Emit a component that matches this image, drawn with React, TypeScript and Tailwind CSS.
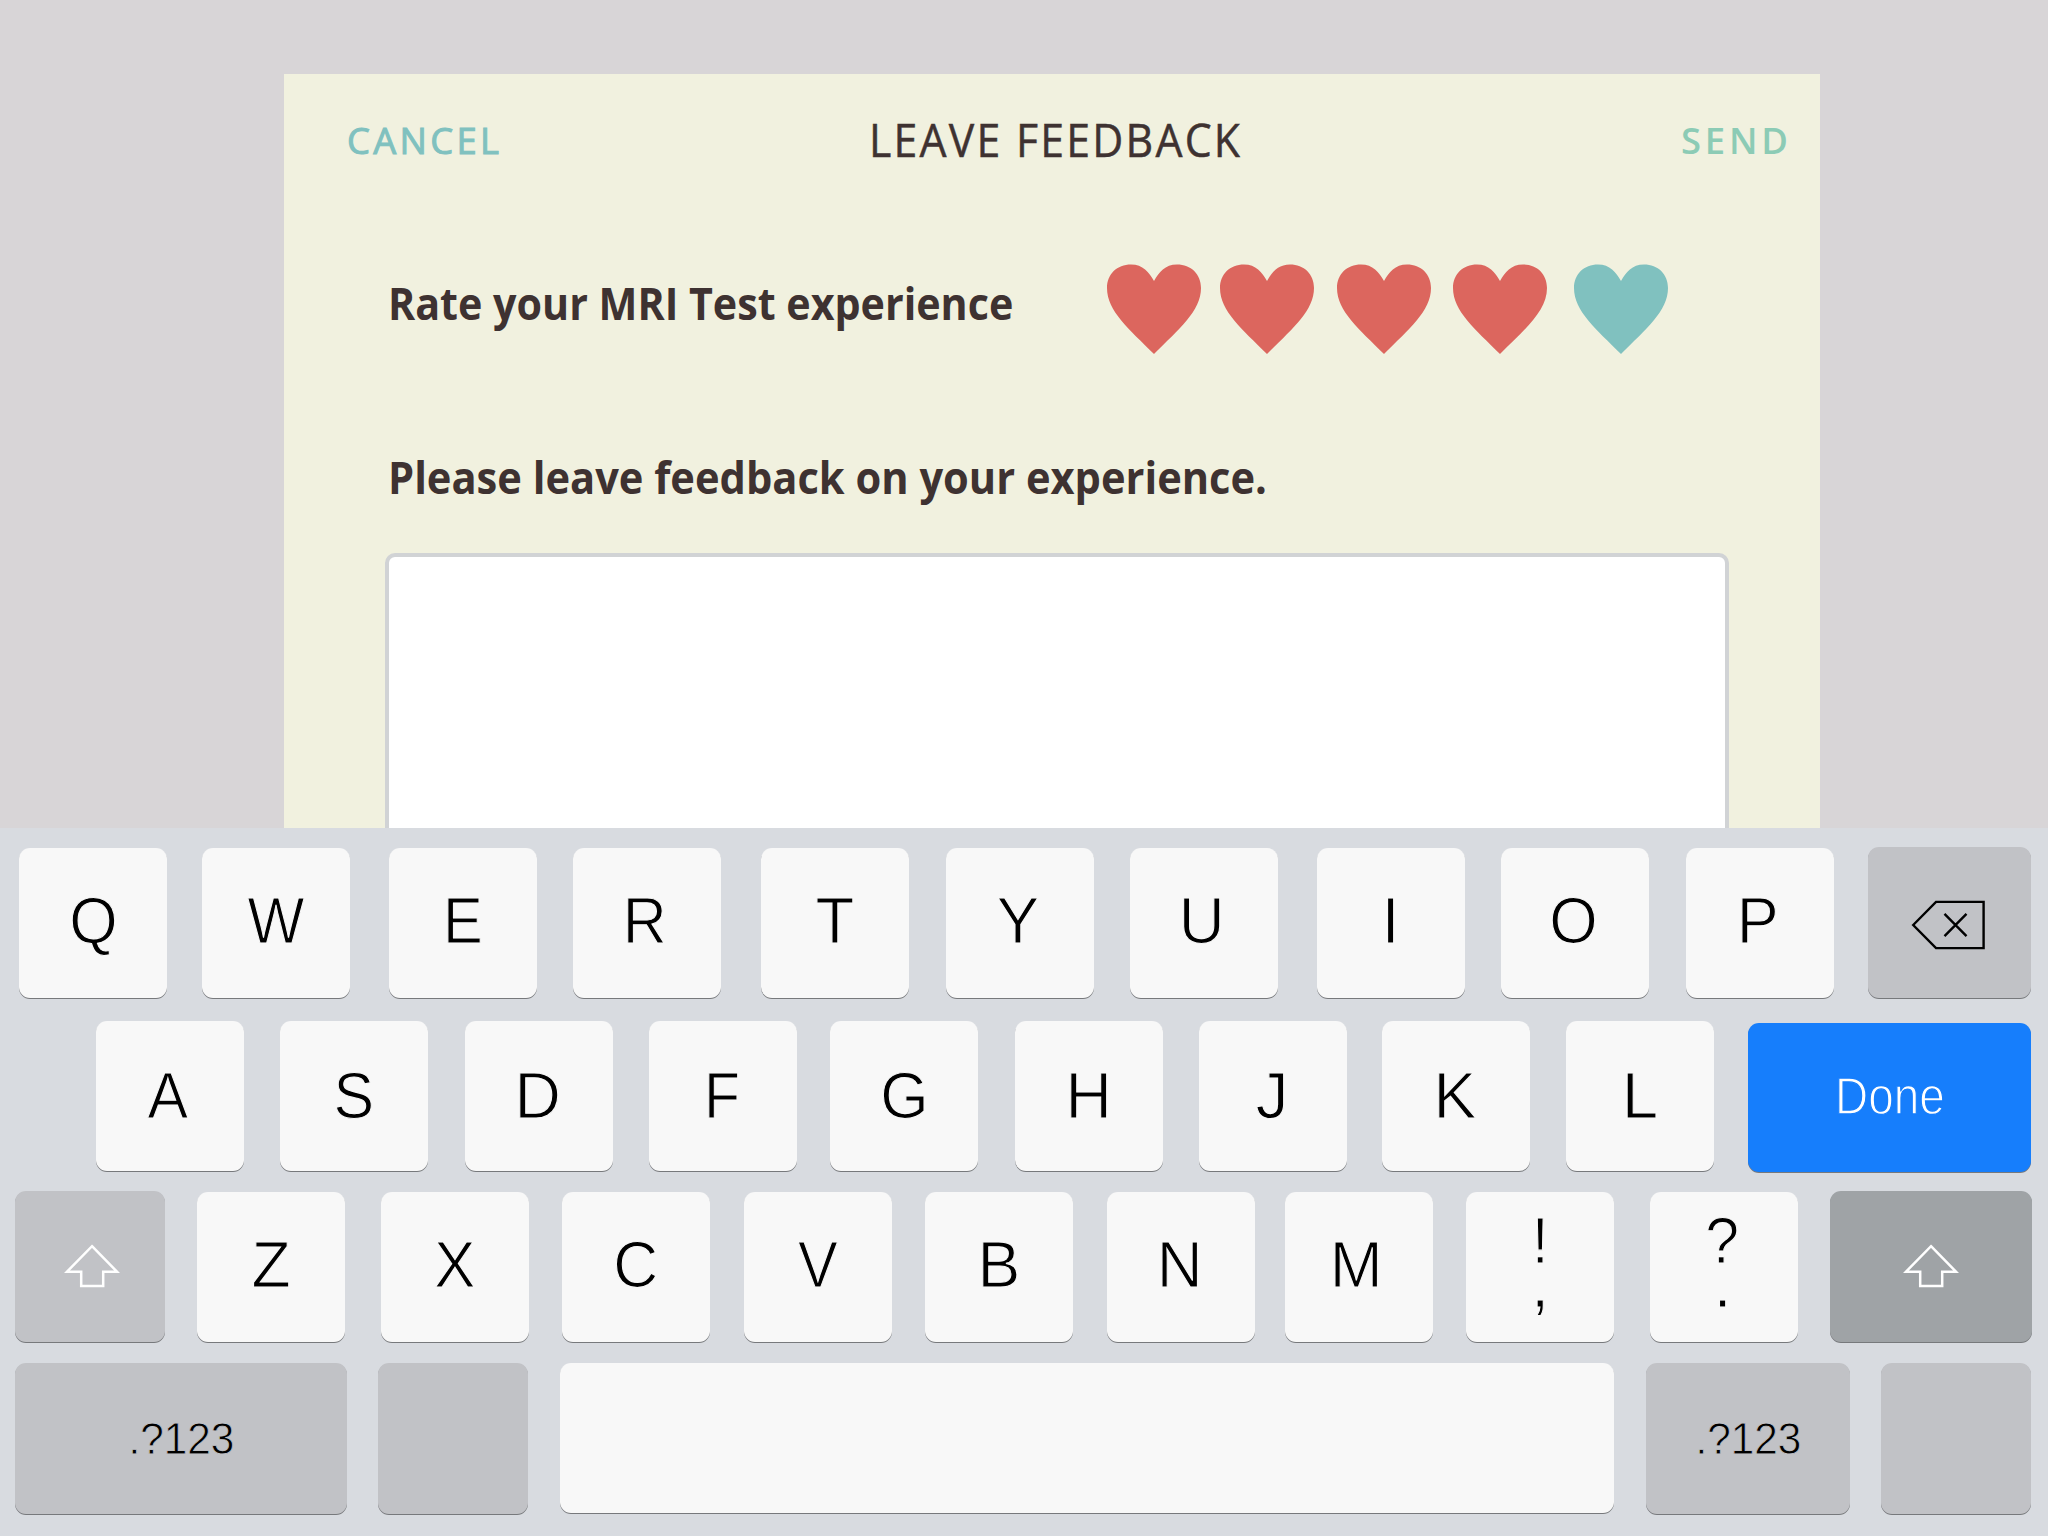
import type { ReactNode } from 'react';

const HEARTS = [
  { spacing: '', color: 'text-[#dc665e]' },
  { spacing: 'ml-[18.5px]', color: 'text-[#dc665e]' },
  { spacing: 'ml-[23.5px]', color: 'text-[#dc665e]' },
  { spacing: 'ml-[22px]', color: 'text-[#dc665e]' },
  { spacing: 'ml-[26.5px]', color: 'text-[#80c1bf]' },
];

function Heart({ className }: { className: string }) {
  return (
    <svg viewBox="0 0 94 90" className={`h-[90px] w-[94px] shrink-0 ${className}`} fill="currentColor">
      <path d="M47 90C22 65 0 47 0 24C0 10 10 0.4 24 0.4C36 0.4 42 8 47 17C52 8 58 0.4 70 0.4C84 0.4 94 10 94 24C94 47 72 65 47 90Z" />
    </svg>
  );
}

function ShiftIcon({ className = '' }: { className?: string }) {
  return (
    <svg viewBox="0 0 56 44" className={`h-[44px] w-[56px] ${className}`} fill="none" stroke="#fff" strokeWidth="2.5">
      <path d="M28 2.2L53 27.7H39.2V42H17.2V27.7H3Z" />
    </svg>
  );
}

function BackspaceIcon() {
  return (
    <svg viewBox="0 0 76 50" className="mt-[4px] mr-[3px] h-[50px] w-[76px]" fill="none" stroke="#000" strokeWidth="2.4">
      <path d="M3.2 25L26 1.9H73.6V48.1H26Z" />
      <path d="M34.5 13.8L56.5 36.2M56.5 13.8L34.5 36.2" />
    </svg>
  );
}

type KeyProps = {
  className?: string;
  tone?: string;
  children?: ReactNode;
};

function Key({ className = '', tone = 'bg-[#f8f8f8]', children }: KeyProps) {
  return (
    <button
      type="button"
      className={`flex shrink-0 items-center justify-center rounded-[11px] text-black shadow-[0_1px_0.5px_#77797c] ${tone} ${className}`}
    >
      {children}
    </button>
  );
}

type LetterKey = { label: string; spacing: string; width: string; nudge?: string };

const TOP_ROW: LetterKey[] = [
  { label: 'Q', spacing: 'ml-[18.5px]', width: 'scale-x-[0.95]', nudge: 'pl-[1px]' },
  { label: 'W', spacing: 'ml-[35.5px]', width: 'scale-x-[0.92]' },
  { label: 'E', spacing: 'ml-[39px]', width: 'scale-x-[0.91]', nudge: 'pr-[1px]' },
  { label: 'R', spacing: 'ml-[36px]', width: 'scale-x-[0.93]', nudge: 'pr-[4px]' },
  { label: 'T', spacing: 'ml-[40px]', width: 'scale-x-[0.97]' },
  { label: 'Y', spacing: 'ml-[37px]', width: 'scale-x-[0.97]', nudge: 'pr-[4px]' },
  { label: 'U', spacing: 'ml-[36px]', width: 'scale-x-[0.97]', nudge: 'pr-[4px]' },
  { label: 'I', spacing: 'ml-[38.5px]', width: 'scale-x-[1]' },
  { label: 'O', spacing: 'ml-[36px]', width: 'scale-x-[0.95]', nudge: 'pr-[2px]' },
  { label: 'P', spacing: 'ml-[37px]', width: 'scale-x-[0.96]', nudge: 'pr-[4px]' },
];

const HOME_ROW: LetterKey[] = [
  { label: 'A', spacing: 'ml-[95.5px]', width: 'scale-x-[0.93]', nudge: 'pr-[4px]' },
  { label: 'S', spacing: 'ml-[36.5px]', width: 'scale-x-[0.93]', nudge: 'pr-[1px]' },
  { label: 'D', spacing: 'ml-[37px]', width: 'scale-x-[0.98]', nudge: 'pr-[2px]' },
  { label: 'F', spacing: 'ml-[36px]', width: 'scale-x-[0.9]', nudge: 'pr-[1px]' },
  { label: 'G', spacing: 'ml-[33px]', width: 'scale-x-[0.95]', nudge: 'pl-[1px]' },
  { label: 'H', spacing: 'ml-[37px]', width: 'scale-x-[0.98]', nudge: 'pr-[1px]' },
  { label: 'J', spacing: 'ml-[36px]', width: 'scale-x-[1]', nudge: 'pr-[2px]' },
  { label: 'K', spacing: 'ml-[35px]', width: 'scale-x-[0.98]', nudge: 'pr-[2px]' },
  { label: 'L', spacing: 'ml-[36px]', width: 'scale-x-[1]' },
];

const BOTTOM_ROW: LetterKey[] = [
  { label: 'Z', spacing: 'ml-[32px]', width: 'scale-x-[0.98]' },
  { label: 'X', spacing: 'ml-[35.5px]', width: 'scale-x-[0.94]' },
  { label: 'C', spacing: 'ml-[33.5px]', width: 'scale-x-[0.95]' },
  { label: 'V', spacing: 'ml-[33.5px]', width: 'scale-x-[0.91]' },
  { label: 'B', spacing: 'ml-[33.5px]', width: 'scale-x-[0.98]' },
  { label: 'N', spacing: 'ml-[34px]', width: 'scale-x-[0.97]', nudge: 'pr-[3px]' },
  { label: 'M', spacing: 'ml-[29.5px]', width: 'scale-x-[0.97]', nudge: 'pr-[4px]' },
];

// A stroke in the key's own colour trims the regular weight down to a light one.
const LIGHT_LETTER = 'text-[65.5px] [-webkit-text-stroke:1.1px_#f8f8f8]';

function Letters({ keys, lift }: { keys: LetterKey[]; lift: string }) {
  return (
    <>
      {keys.map(({ label, spacing, width, nudge = '' }) => (
        <Key key={label} className={`h-[150px] w-[148px] ${spacing} ${nudge}`}>
          <span className={`inline-block leading-[60px] ${LIGHT_LETTER} ${lift} ${width}`}>{label}</span>
        </Key>
      ))}
    </>
  );
}

function PunctuationKey({ upper, lower, spacing }: { upper: string; lower: string; spacing: string }) {
  return (
    <Key className={`h-[150px] w-[148px] flex-col pb-[9px] leading-[44px] ${LIGHT_LETTER} ${spacing}`}>
      <span className="inline-block scale-x-[0.93]">{upper}</span>
      <span>{lower}</span>
    </Key>
  );
}

function NumberLabel() {
  return (
    <span className="inline-block scale-x-[0.94] text-[45px] leading-none [-webkit-text-stroke:0.8px_#c1c2c6]">.?123</span>
  );
}

const GRAY = 'bg-[#c1c2c6]';

export default function App() {
  return (
    <div className="flex h-[1536px] w-[2048px] flex-col overflow-hidden bg-[#d8d5d7]">
      <main className="ml-[284px] h-[828px] w-[1536px] overflow-hidden pt-[74px]">
        <div className="h-[900px] bg-[#f1f1df] font-['Open_Sans',sans-serif] text-[#3e3231]">
          <header className="flex h-[132px] items-center">
            <div className="w-[524px] pl-[63px]">
              <button type="button" className="text-[36.4px] leading-[50px] tracking-[3.3px] text-[#80c1bf] [-webkit-text-stroke:1px_#80c1bf]">
                CANCEL
              </button>
            </div>
            <div className="-mt-[3px] w-[488px] pl-[61px]">
              <h1 className="origin-left scale-x-[0.93] text-[46px] leading-[60px] font-normal whitespace-nowrap tracking-[2.4px] [-webkit-text-stroke:0.5px_#3e3231]">
                LEAVE FEEDBACK
              </h1>
            </div>
            <div className="flex-1 pl-[385px]">
              <button type="button" className="text-[36.4px] leading-[50px] font-semibold tracking-[3.8px] text-[#8ccbb5]">
                SEND
              </button>
            </div>
          </header>

          <section className="mt-[58px] flex h-[90px] items-center">
            <h2 className="-mt-[14px] ml-[104px] w-[719px] origin-left scale-x-[0.906] text-[45.5px] leading-[60px] font-bold whitespace-nowrap">
              Rate your MRI Test experience
            </h2>
            <div className="flex">
              {HEARTS.map(({ spacing, color }, i) => (
                <Heart key={i} className={`${spacing} ${color}`} />
              ))}
            </div>
          </section>

          <h2 className="mt-[92px] ml-[104px] w-[1200px] origin-left scale-x-[0.915] text-[45.5px] leading-[60px] font-bold whitespace-nowrap">
            Please leave feedback on your experience.
          </h2>
          <div className="mt-[47px] ml-[101px] h-[420px] w-[1344px] rounded-[10px] border-4 border-[#d1d3d5] bg-white" />
        </div>
      </main>

      <section className="h-[708px] bg-[#d8dbe0] pt-[20px] font-['Liberation_Sans',sans-serif]">
        <div className="flex items-start">
          <Letters keys={TOP_ROW} lift="-mt-[4px]" />
          <Key tone={GRAY} className="-mt-px ml-[34.5px] h-[151px] w-[163px]">
            <BackspaceIcon />
          </Key>
        </div>

        <div className="mt-[23px] flex h-[150px] items-start">
          <Letters keys={HOME_ROW} lift="" />
          <Key tone="bg-[#167efc]" className="mt-[2px] ml-[34px] h-[149px] w-[283px]">
            <span className="-mt-[2px] inline-block scale-x-[0.9] text-[51px] leading-none text-white [-webkit-text-stroke:1.3px_#167efc]">
              Done
            </span>
          </Key>
        </div>

        <div className="mt-[21px] flex h-[150px] items-start">
          <Key tone={GRAY} className="-mt-px ml-[15px] h-[151px] w-[150px]">
            <ShiftIcon className="-mt-[2px] ml-[4px]" />
          </Key>
          <Letters keys={BOTTOM_ROW} lift="-mt-[4px]" />
          <PunctuationKey upper="!" lower="," spacing="ml-[33.5px]" />
          <PunctuationKey upper="?" lower="." spacing="ml-[35.5px] pr-[2px]" />
          <Key tone="bg-[#9fa3a6]" className="-mt-px ml-[32px] h-[151px] w-[202px]">
            <ShiftIcon className="-mt-[2px]" />
          </Key>
        </div>

        <div className="mt-[21px] flex items-start">
          <Key tone={GRAY} className="ml-[15px] h-[151px] w-[332px]">
            <NumberLabel />
          </Key>
          <Key tone={GRAY} className="ml-[31px] h-[151px] w-[150px]" />
          <Key className="ml-[32px] h-[150px] w-[1054px]" />
          <Key tone={GRAY} className="ml-[32px] h-[151px] w-[204px]">
            <NumberLabel />
          </Key>
          <Key tone={GRAY} className="ml-[31px] h-[151px] w-[150px]" />
        </div>
      </section>
    </div>
  );
}
